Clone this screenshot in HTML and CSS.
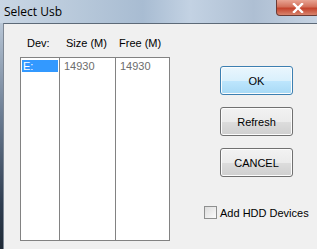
FILE: index.html
```html
<!DOCTYPE html>
<html lang="en">
<head>
    <meta charset="UTF-8">
    <title>Select Usb</title>
    <link rel="stylesheet" href="styles.css">
</head>
<body>
    <div class="window">
        <div class="titlebar">
            <span class="title">Select Usb</span>
            <span class="close">
                <svg width="12" height="10" viewBox="0 0 12 10">
                    <path d="M2 1 L10 9 M10 1 L2 9" stroke="#fff" stroke-width="2.4" stroke-linecap="square"/>
                </svg>
            </span>
        </div>
        <div class="frame">
            <div class="frame-left"></div>
            <div class="client">
                <div class="left-pane">
                    <div class="headers">
                        <span class="h-dev">Dev:</span>
                        <span class="h-size">Size (M)</span>
                        <span class="h-free">Free (M)</span>
                    </div>
                    <div class="list">
                        <div class="col col-dev"><span class="sel">E:</span></div>
                        <div class="col col-size"><span class="val">14930</span></div>
                        <div class="col col-free"><span class="val">14930</span></div>
                    </div>
                </div>
                <div class="right-pane">
                    <button class="btn btn-default">OK</button>
                    <button class="btn">Refresh</button>
                    <button class="btn">CANCEL</button>
                    <label class="check">
                        <span class="box"></span>
                        Add HDD Devices
                    </label>
                </div>
            </div>
        </div>
    </div>
</body>
</html>
```
FILE: styles.css
```css
body {
    margin: 0;
    font-family: "Liberation Sans", Arial, sans-serif;
    font-size: 11px;
    color: #000;
}
.window {
    width: 317px;
    height: 249px;
    overflow: hidden;
    display: flex;
    flex-direction: column;
}
.titlebar {
    height: 23px;
    display: flex;
    justify-content: space-between;
    align-items: flex-start;
    background: linear-gradient(90deg, #c9d6e4 0%, #b7c8da 25%, #a8bcd2 45%, #c3d2e3 60%, #aebfd3 80%, #c6d3e2 100%);
}
.title {
    font-family: "Open Sans", "Liberation Sans", sans-serif;
    font-size: 12px;
    padding: 3px 0 0 4px;
    color: #000;
}
.close {
    width: 41px;
    height: 15px;
    margin-right: -2px;
    border: 1px solid #6b3b35;
    border-top: none;
    border-radius: 0 0 4px 4px;
    background: linear-gradient(#e8a493 0%, #d3705a 45%, #c4432c 55%, #d8846d 100%);
    display: flex;
    justify-content: center;
    align-items: center;
}
.frame {
    flex: 1;
    display: flex;
}
.frame-left {
    width: 3px;
    background: linear-gradient(#b8c6d6, #6d7e94 40%, #2f3d50 80%, #1f2a36);
}
.client {
    flex: 1;
    display: flex;
    background: #f0f0f0;
    border-top: 1px solid #5d6a78;
    border-left: 1px solid #7d8794;
}
.left-pane {
    padding: 0 0 0 16px;
    display: flex;
    flex-direction: column;
}
.headers {
    display: flex;
    height: 33px;
    align-items: center;
    padding-top: 4px;
    box-sizing: border-box;
}
.h-dev { width: 39px; padding-left: 7px; box-sizing: border-box; }
.h-size { width: 56px; padding-left: 7px; box-sizing: border-box; }
.h-free { width: 55px; padding-left: 4px; box-sizing: border-box; }
.list {
    display: flex;
    width: 150px;
    height: 184px;
    box-sizing: border-box;
    border: 1px solid #828282;
    background: #fff;
}
.col {
    padding: 2px 1px;
}
.col-dev { width: 39px; box-sizing: border-box; border-right: 1px solid #828282; }
.col-size { width: 56px; box-sizing: border-box; border-right: 1px solid #828282; }
.col-free { flex: 1; }
.sel {
    display: block;
    background: #3399ff;
    color: #fff;
    height: 12px;
    line-height: 12px;
    padding-left: 1px;
}
.val {
    display: block;
    color: #6d6d6d;
    padding-left: 3px;
    line-height: 12px;
}
.right-pane {
    padding: 42px 0 0 50px;
    display: flex;
    flex-direction: column;
    align-items: flex-start;
}
.btn {
    width: 73px;
    height: 29px;
    margin-bottom: 12px;
    font-family: "Liberation Sans", Arial, sans-serif;
    font-size: 11px;
    color: #000;
    border: 1px solid #707070;
    border-radius: 3px;
    background: linear-gradient(#f2f2f2 0%, #ebebeb 50%, #dddddd 51%, #cfcfcf 100%);
    box-shadow: inset 0 0 0 1px #fcfcfc;
}
.btn-default {
    border-color: #3c7fb1;
    background: linear-gradient(#eaf6fd 0%, #d9f0fc 50%, #bee6fd 51%, #a7d9f5 100%);
}
.check {
    display: flex;
    align-items: center;
    gap: 3px;
    margin: 17px 0 0 -16px;
}
.box {
    width: 11px;
    height: 11px;
    border: 1px solid #8e8f8f;
    background: linear-gradient(135deg, #dcdcdc, #fbfbfb);
}
```
